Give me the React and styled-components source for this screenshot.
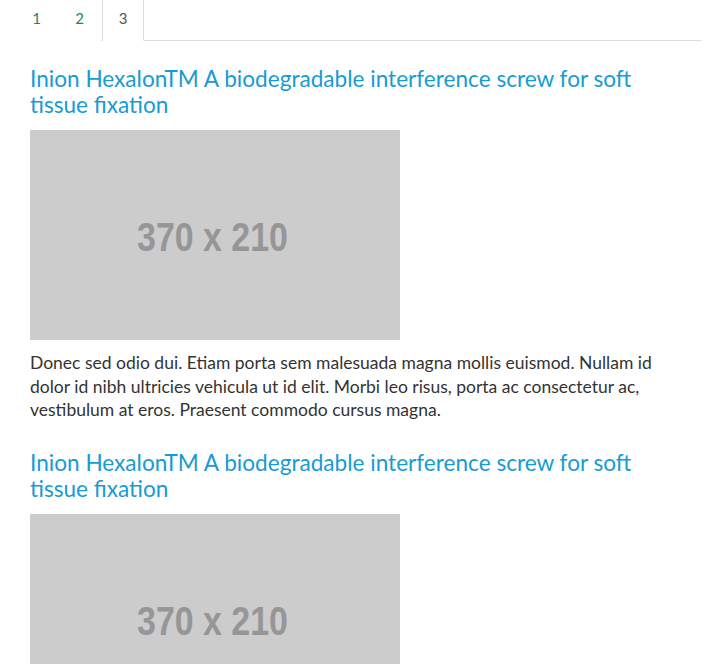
import styled, { createGlobalStyle } from "styled-components";

const GlobalStyle = createGlobalStyle`
  body {
    margin: 0;
    background: #fff;
    font-family: Lato, "Open Sans", sans-serif;
    color: #333;
  }
`;

const tabs = ["1", "2", "3"];
const articles = [1, 2];

const Placeholder = () => (
  <Thumb viewBox="0 0 370 210" width="370" height="210">
    <rect width="370" height="210" fill="#cccccc" />
    <text
      x="107"
      y="121"
      textLength="151"
      lengthAdjust="spacingAndGlyphs"
      fill="#969696"
      fontFamily="Liberation Sans, Arial, sans-serif"
      fontWeight="700"
      fontSize="40"
    >
      370 x 210
    </text>
  </Thumb>
);

const App = () => {
  return (
    <>
      <GlobalStyle />
      <Wrapper>
        <TabBar>
          {tabs.map((t) => (
            <Tab key={t} $active={t === "3"}>{t}</Tab>
          ))}
        </TabBar>
        <Content>
          {articles.map((i) => (
            <Article key={i}>
              <Title>Inion HexalonTM A biodegradable interference screw for soft tissue fixation</Title>
              <Placeholder />
              <Text>
                Donec sed odio dui. Etiam porta sem malesuada magna mollis euismod. Nullam id dolor id nibh ultricies vehicula ut id elit. Morbi leo risus, porta ac consectetur ac, vestibulum at eros. Praesent commodo cursus magna.
              </Text>
            </Article>
          ))}
        </Content>
      </Wrapper>
    </>
  );
};

const Wrapper = styled.div`
  padding: 0 15px;
  width: 686px;
`;

const TabBar = styled.ul`
  display: flex;
  list-style: none;
  margin: 0;
  padding: 0;
  border-bottom: 1px solid #ddd;
  height: 40px;
`;

const Tab = styled.li`
  box-sizing: border-box;
  height: 41px;
  display: flex;
  align-items: center;
  justify-content: center;
  padding-bottom: 4px;
  font-size: 15px;
  color: ${(p) => (p.$active ? "#555" : "#158a5c")};
  background: #fff;
  border: 1px solid ${(p) => (p.$active ? "#ddd" : "transparent")};
  border-bottom-color: ${(p) => (p.$active ? "#fff" : "transparent")};
  border-top: none;
  margin-left: ${(p) => (p.$active ? "1px" : "0")};
  width: ${(p) => (p.$active ? "42px" : "43px")};
`;

const Content = styled.div`
  padding: 25px 15px 0;
`;

const Article = styled.div`
  margin-bottom: 28px;
`;

const Title = styled.h3`
  margin: 0 0 12px;
  font-size: 22.6px;
  font-weight: 400;
  line-height: 26px;
  color: #179bd3;
`;

const Thumb = styled.svg`
  display: block;
  margin-bottom: 11px;
`;

const Text = styled.p`
  margin: 0;
  font-size: 17.5px;
  line-height: 23.5px;
  color: #333;
`;

export default App;
